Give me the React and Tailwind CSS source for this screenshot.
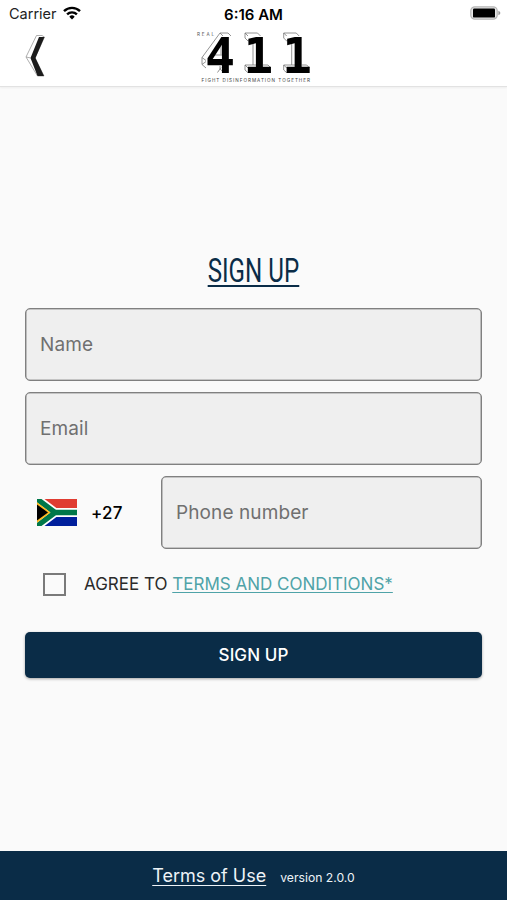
import { useState } from 'react'

// left edge of each "1" in the logo
const oneOffsets = [248, 286.7]

const StatusBar = () => (
  <div className="h-7 grid grid-cols-3 items-center text-[15px] leading-none text-[#222]">
    <div className="flex items-center pl-[9px] gap-[6px]">
      <span className="text-[14.5px]">Carrier</span>
      <svg className="w-[18px] h-[14px] mb-[3px]" viewBox="0 0 18 14" fill="none" stroke="#000" strokeWidth="2.4">
        <path d="M1 5.2a11.4 11.4 0 0 1 16 0" />
        <path d="M4.1 8.4a7 7 0 0 1 9.8 0" />
        <path d="M9 13.4 6.3 10.7a3.8 3.8 0 0 1 5.4 0z" fill="#000" stroke="none" />
      </svg>
    </div>
    <div className="text-center font-semibold text-black">6:16 AM</div>
    <div className="flex justify-end pr-[6px] pb-[2px]">
      <svg className="w-[31px] h-[14px]" viewBox="0 0 31 14">
        <rect x="0.8" y="0.8" width="26.4" height="12.4" rx="4" fill="#e8e8e8" stroke="#b5b5b5" strokeWidth="1.2" />
        <rect x="3" y="2.4" width="22" height="9.2" rx="1.2" fill="#000" />
        <path d="M28.4 4.8q2 .7 2 2.2t-2 2.2z" fill="#999" />
      </svg>
    </div>
  </div>
)

const Logo = () => (
  <svg
    className="w-[120px] h-[54px]"
    viewBox="194 30 120 54"
    fontFamily="Inter, sans-serif"
  >
    <text x="197" y="36" fontSize="4.6" textLength="17" fill="#555">REAL</text>
    {/* wireframe sides behind the solid digits */}
    <g fill="none" stroke="#777" strokeWidth="0.8">
      <path d="M206 68l-4-3.5v-7L220 33h8l3 3M202 57.5l4 3M220 33l3 3M202 64.5l4-3M221 42.5v12M212 55h10M217.5 72.5l3.5-5M224 72.5l-4-3.5v-3" />
      {oneOffsets.map((x) => (
        <g key={x} transform={`translate(${x} 0)`}>
          <path d="M0 41l-3-3v-5h12.5l3 3M-3 33l3 3M0 41l3-1M5 41v24h4M5 65h-8v5l3 2.7M-3 65l3 3M15 65h5l3 3" />
        </g>
      ))}
    </g>
    <g fontSize="50" fontWeight="700" fontFamily="'DejaVu Sans Mono', monospace" fill="#000">
      <text x="205" y="72.5">4</text>
      <text x="243.3" y="72.5">1</text>
      <text x="282" y="72.5">1</text>
    </g>
    <text x="201.5" y="82" fontSize="4.6" textLength="108.5" fill="#444">
      FIGHT DISINFORMATION TOGETHER
    </text>
  </svg>
)

const Header = () => (
  <header className="h-[87px] shrink-0 bg-white border-b border-[#e2e2e2] shadow-[0_1px_2px_rgba(0,0,0,0.05)]">
    <StatusBar />
    <div className="grid grid-cols-3 pt-[2px]">
      <button className="pl-[25px] pt-[4px] justify-self-start self-start" aria-label="Back">
        <svg className="w-[20px] h-[44px]" viewBox="0 0 20 44">
          <path d="M1 23 11.5 1.5H17l2.5 1.5L10 24l9 18h-6.5z" fill="#fff" stroke="#999" strokeWidth="0.8" />
          <path d="M14 3h5.5L10.5 24 19 42h-6.5L5.5 24z" fill="#1c1c1c" />
          <path d="M1 23l5 1" stroke="#999" strokeWidth="0.8" />
        </svg>
      </button>
      <div className="flex justify-center">
        <Logo />
      </div>
    </div>
  </header>
)

const Field = ({ placeholder, type = 'text' }) => (
  <input
    type={type}
    placeholder={placeholder}
    className="block w-full h-[73px] px-[14px] rounded-[5px] border border-[#808080] shadow-[inset_0_0_0_0.6px_#9a9a9a] bg-[#efefef] text-[19px] tracking-[0.1px] text-[#222] placeholder:text-[#707070] outline-none"
  />
)

const Flag = () => (
  <svg className="w-[40px] h-[27px]" viewBox="0 0 40 27">
    <path d="M0 0h40v13.5H0z" fill="#e03c31" />
    <path d="M0 13.5h40V27H0z" fill="#001f9c" />
    <path d="M0 0 18 13.5H40M0 27 18 13.5" fill="none" stroke="#fff" strokeWidth="9" />
    <path d="M0 0 18 13.5H40M0 27 18 13.5" fill="none" stroke="#007749" strokeWidth="5.4" />
    <path d="M0 3.2 13.5 13.5 0 23.8z" fill="#ffb81c" />
    <path d="M0 5.4 11 13.5 0 21.6z" fill="#000" />
  </svg>
)

const App = () => {
  const [agreed, setAgreed] = useState(false)

  return (
    <div className="h-screen flex flex-col bg-[#fafafa] font-[Inter,sans-serif]">
      <Header />

      <main className="flex-1 flex flex-col px-[25px] pt-[163px]">
        <div className="flex justify-center h-[58px]">
          <h1 className="h-[37px] scale-x-[0.71] whitespace-nowrap border-b-2 border-[#0a2c47] font-[Roboto,sans-serif] text-[34px] leading-[40px] text-[#0a2c47]">
            SIGN UP
          </h1>
        </div>

        <div className="flex flex-col gap-[11px]">
          <Field placeholder="Name" />
          <Field placeholder="Email" type="email" />
          <div className="flex items-center">
            <div className="w-[136px] shrink-0 flex items-center pl-3 gap-[14px]">
              <Flag />
              <span className="pt-[2px] text-[17px] tracking-[0.2px] font-medium text-black">+27</span>
            </div>
            <Field placeholder="Phone number" type="tel" />
          </div>
        </div>

        <div className="flex items-center mt-[23px] pl-[18px] h-6 gap-[18px] text-[17px] text-[#2a2a2a]">
          <button
            role="checkbox"
            aria-checked={agreed}
            aria-label="Agree to terms and conditions"
            onClick={() => setAgreed(!agreed)}
            className={`size-[23px] border-[2.5px] border-[#7a7a7a] ${agreed ? 'bg-[#0a2c47]' : 'bg-transparent'}`}
          />
          <p className="whitespace-nowrap pt-[2px]">
            AGREE TO{' '}
            <a href="#terms" className="text-[#4fa3a8] underline underline-offset-2 decoration-1">TERMS AND CONDITIONS*</a>
          </p>
        </div>

        <button className="mt-[36px] h-[46px] w-full shrink-0 rounded-[5px] bg-[#0a2c47] pt-[2px] text-[17px] tracking-[0.1px] font-medium text-white shadow-[0_1px_3px_rgba(0,0,0,0.35)]">
          SIGN UP
        </button>
      </main>

      <footer className="h-[49px] shrink-0 flex items-center justify-center gap-[14px] bg-[#0a2c47] text-[#eef3f7]">
        <a href="#terms-of-use" className="text-[18px] underline underline-offset-[3px] decoration-1">Terms of Use</a>
        <span className="text-[12.2px] pt-[5px]">version 2.0.0</span>
      </footer>
    </div>
  )
}

export default App
